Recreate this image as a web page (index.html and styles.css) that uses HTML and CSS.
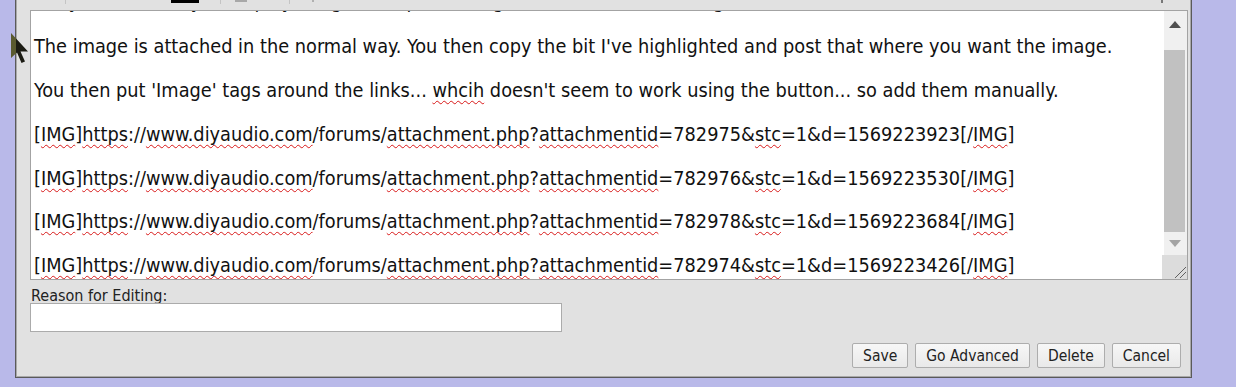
FILE: index.html
```html
<!DOCTYPE html>
<html lang="en">
<head>
<meta charset="utf-8">
<title>Quick Edit</title>
<link rel="stylesheet" href="styles.css">
</head>
<body>
<div class="panel">
  <div class="toolbar">
    <span class="tb-sep s1"></span>
    <span class="tb-black"></span>
    <span class="tb-sep s2"></span>
    <span class="tb-gray"></span>
    <span class="tb-sep s3"></span>
    <span class="tb-mark"></span>
    <span class="tb-dot"></span>
  </div>
  <div class="editor">
    <div class="text">
      <div class="scroll">
        <p class="prev">Okay, this is how you display images in a post, using the attachments manager.</p>
        <p>The image is attached in the normal way. You then copy the bit I've highlighted and post that where you want the image.</p>
        <p>You then put 'Image' tags around the links... <span class="sp">whcih</span> doesn't seem to work using the button... so add them manually.</p>
        <p>[<span class="sp">IMG</span>]<span class="sp">https</span>://<span class="sp">www.diyaudio.com</span>/forums/<span class="sp">attachment.php</span>?<span class="sp">attachmentid</span>=782975&amp;<span class="sp">stc</span>=1&amp;d=1569223923[/<span class="sp">IMG</span>]</p>
        <p>[<span class="sp">IMG</span>]<span class="sp">https</span>://<span class="sp">www.diyaudio.com</span>/forums/<span class="sp">attachment.php</span>?<span class="sp">attachmentid</span>=782976&amp;<span class="sp">stc</span>=1&amp;d=1569223530[/<span class="sp">IMG</span>]</p>
        <p>[<span class="sp">IMG</span>]<span class="sp">https</span>://<span class="sp">www.diyaudio.com</span>/forums/<span class="sp">attachment.php</span>?<span class="sp">attachmentid</span>=782978&amp;<span class="sp">stc</span>=1&amp;d=1569223684[/<span class="sp">IMG</span>]</p>
        <p>[<span class="sp">IMG</span>]<span class="sp">https</span>://<span class="sp">www.diyaudio.com</span>/forums/<span class="sp">attachment.php</span>?<span class="sp">attachmentid</span>=782974&amp;<span class="sp">stc</span>=1&amp;d=1569223426[/<span class="sp">IMG</span>]</p>
      </div>
    </div>
    <div class="side">
      <div class="scrollbar">
        <div class="sb-btn up"><svg width="12" height="7" viewBox="0 0 12 7"><path d="M0 7 L6 0 L12 7 Z" fill="#505050"/></svg></div>
        <div class="sb-track"><div class="sb-thumb"></div></div>
        <div class="sb-btn down"><svg width="12" height="7" viewBox="0 0 12 7"><path d="M0 0 L12 0 L6 7 Z" fill="#a3a3a3"/></svg></div>
      </div>
      <div class="resizer"><svg width="25" height="24" viewBox="0 0 25 24"><path d="M13 23 L24 12 M18 23 L24 17" stroke="#606060" stroke-width="1" fill="none"/></svg></div>
    </div>
  </div>
  <label class="reason-label" for="reason">Reason for Editing:</label>
  <input class="reason" id="reason" type="text">
  <div class="buttons">
    <button class="btn">Save</button>
    <button class="btn">Go Advanced</button>
    <button class="btn">Delete</button>
    <button class="btn">Cancel</button>
  </div>
</div>
<svg class="cursor" width="20" height="34" viewBox="0 0 20 34">
  <defs>
    <linearGradient id="cg" gradientUnits="userSpaceOnUse" x1="0" y1="0" x2="20" y2="0">
      <stop offset="0.3" stop-color="#5a5a30"/>
      <stop offset="0.3" stop-color="#1c1c14"/>
    </linearGradient>
  </defs>
  <path d="M1 1 L1 26 L7 20.5 L11.5 31 L15 29.5 L10.5 19.5 L18 19.5 Z" fill="url(#cg)"/>
</svg>
</body>
</html>
```

FILE: styles.css
```css
html, body {
  margin: 0;
  padding: 0;
}
body {
  background: #b9b9e9;
  height: 387px;
  overflow: hidden;
  position: relative;
  font-family: "DejaVu Sans Condensed", "DejaVu Sans", sans-serif;
  font-stretch: condensed;
  color: #111;
}
.panel {
  margin-left: 15px;
  width: 1177px;
  height: 378px;
  box-sizing: border-box;
  background: #e1e1e1;
  border: 1px solid #5a5a5a;
  border-top: none;
  box-shadow: inset 1px 0 0 #a9a9a9, inset -1px 0 0 #a9a9a9, inset 0 -1px 0 #a9a9a9;
  padding: 0 3px 0 14px;
  display: flex;
  flex-direction: column;
}
.toolbar {
  height: 10px;
  display: flex;
  align-items: flex-start;
  overflow: hidden;
}
.tb-sep {
  width: 1px;
  height: 4px;
  background: #c4c4c4;
}
.s1 { margin-left: 35px; }
.tb-black {
  width: 28px;
  height: 3px;
  background: #000;
  margin-left: 105px;
}
.s2 { margin-left: 21px; }
.tb-gray {
  width: 12px;
  height: 2px;
  background: #a8a8a8;
  margin-left: 14px;
}
.s3 { margin-left: 42px; }
.tb-mark {
  width: 2px;
  height: 2px;
  background: #b0b0b0;
  margin-left: 22px;
}
.tb-dot {
  width: 2px;
  height: 3px;
  background: #777;
  margin-left: 847px;
}
.editor {
  height: 270px;
  box-sizing: border-box;
  border: 1px solid #a3a3a3;
  background: #fff;
  display: flex;
}
.text {
  flex: 1;
  overflow: hidden;
  padding-left: 3px;
}
.scroll {
  margin-top: -20px;
  font-size: 19.75px;
}
.scroll p {
  margin: 0 0 21.8px;
  line-height: 22px;
  white-space: nowrap;
}
.scroll p.prev {
  margin-bottom: 23.3px;
}
.sp {
  text-decoration: underline wavy #d81818;
  text-decoration-thickness: 1px;
  text-underline-offset: 3px;
  text-decoration-skip-ink: none;
}
.side {
  width: 25px;
  display: flex;
  flex-direction: column;
}
.scrollbar {
  flex: 1;
  margin-left: 2px;
  background: #f0f0f0;
  display: flex;
  flex-direction: column;
}
.sb-btn {
  display: flex;
  align-items: center;
  justify-content: center;
  padding-right: 2px;
}
.sb-btn.up { height: 26px; }
.sb-btn.down { height: 23px; }
.sb-track {
  flex: 1;
}
.sb-thumb {
  margin-top: 13px;
  height: 182px;
  width: 21px;
  background: #c1c1c1;
}
.resizer {
  height: 24px;
  background: #dcdcdc;
  display: flex;
}
.reason-label {
  margin-top: 7px;
  margin-left: 1px;
  font-size: 16px;
  line-height: 18px;
  color: #222;
}
.reason {
  margin-top: -2px;
  width: 532px;
  height: 29px;
  box-sizing: border-box;
  border: 1px solid #ababab;
  background: #fff;
  padding: 0 4px;
  outline: none;
}
.buttons {
  margin-top: 11px;
  margin-right: 7px;
  display: flex;
  justify-content: flex-end;
  gap: 7px;
}
.btn {
  height: 25px;
  padding: 0 10px;
  font-family: "DejaVu Sans Condensed", "DejaVu Sans", sans-serif;
  font-stretch: condensed;
  font-size: 15.5px;
  color: #222;
  background: linear-gradient(#f7f7f7, #e9e9e9);
  border: 1px solid #adadad;
  border-radius: 2px;
}
.cursor {
  position: absolute;
  left: 10px;
  top: 32px;
}
```
